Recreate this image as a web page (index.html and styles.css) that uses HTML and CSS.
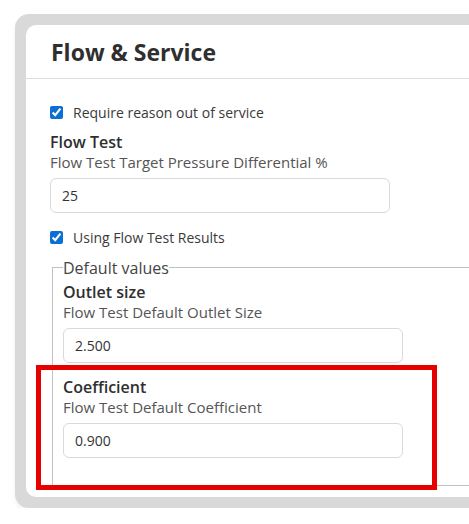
FILE: index.html
```html
<!DOCTYPE html>
<html>
<head>
<meta charset="utf-8">
<link rel="stylesheet" href="styles.css">
</head>
<body>
<div class="frame">
  <div class="card">
    <div class="card-header">
      <h1 class="title">Flow &amp; Service</h1>
    </div>
    <div class="card-body">
      <label class="check-row first">
        <input type="checkbox" checked>
        <span>Require reason out of service</span>
      </label>
      <div class="field field-top">
        <div class="field-label">Flow Test</div>
        <div class="field-desc">Flow Test Target Pressure Differential %</div>
        <input class="text-input" type="text" value="25">
      </div>
      <label class="check-row second">
        <input type="checkbox" checked>
        <span>Using Flow Test Results</span>
      </label>
      <fieldset class="defaults">
        <legend>Default values</legend>
        <div class="field field-outlet">
          <div class="field-label">Outlet size</div>
          <div class="field-desc">Flow Test Default Outlet Size</div>
          <input class="text-input" type="text" value="2.500">
        </div>
        <div class="field highlight-wrap">
          <div class="highlight"></div>
          <div class="field-label">Coefficient</div>
          <div class="field-desc">Flow Test Default Coefficient</div>
          <input class="text-input" type="text" value="0.900">
        </div>
      </fieldset>
    </div>
  </div>
</div>
</body>
</html>
```
FILE: styles.css
```css
html, body {
  margin: 0;
  padding: 0;
  background: #ffffff;
  overflow: hidden;
}
body {
  font-family: "Open Sans", "Liberation Sans", sans-serif;
  color: #333;
}
.frame {
  margin: 14px 0 0 15px;
  width: 520px;
  background: #d9d9d9;
  border-radius: 14px 0 0 14px;
  padding: 11px 0 11px 11px;
  box-shadow: 0 3px 4px rgba(0,0,0,0.06);
}
.card {
  background: #fff;
  border-radius: 10px 0 0 10px;
  height: 472px;
  box-sizing: border-box;
}
.card-header {
  height: 53px;
  border-bottom: 1px solid #dcdcdc;
  padding: 0 0 0 25px;
  display: flex;
  align-items: center;
}
.title {
  margin: 0;
  font-size: 23px;
  font-weight: 700;
  color: #2f2f2f;
}
.card-body {
  padding: 23.5px 0 0 24px;
}
.check-row {
  display: flex;
  align-items: center;
  gap: 10px;
  font-size: 14px;
  line-height: 19px;
  color: #3a3a3a;
}
.check-row input {
  margin: 0;
  width: 13px;
  height: 13px;
  accent-color: #0b6fd6;
}
.field-label {
  font-size: 16px;
  font-weight: 600;
  color: #2f2f2f;
  line-height: 20px;
}
.field-desc {
  font-size: 15px;
  color: #555;
  line-height: 21px;
}
.text-input {
  display: block;
  margin-top: 5px;
  width: 340px;
  height: 35px;
  box-sizing: border-box;
  border: 1px solid #d9d9d9;
  border-radius: 6px;
  padding: 0 11px;
  font-family: "Open Sans", "Liberation Sans", sans-serif;
  font-size: 14px;
  color: #333;
  outline: none;
}
.field-top { margin-top: 10px; }
.second { margin-top: 15px; }
.defaults {
  margin: 12px 0 0 2px;
  width: 500px;
  border: 1px solid #c2c2c2;
  border-radius: 0;
  padding: 0 10px 27px 10px;
}
.defaults legend {
  padding: 0;
  font-size: 16px;
  color: #444;
  line-height: 18px;
}
.field-outlet { margin-top: 5px; }
.highlight-wrap {
  position: relative;
  margin-top: 14px;
}
.highlight {
  position: absolute;
  left: -27px;
  top: -12px;
  width: 401px;
  height: 125px;
  box-sizing: border-box;
  border: 5px solid #e60000;
  pointer-events: none;
}
```
